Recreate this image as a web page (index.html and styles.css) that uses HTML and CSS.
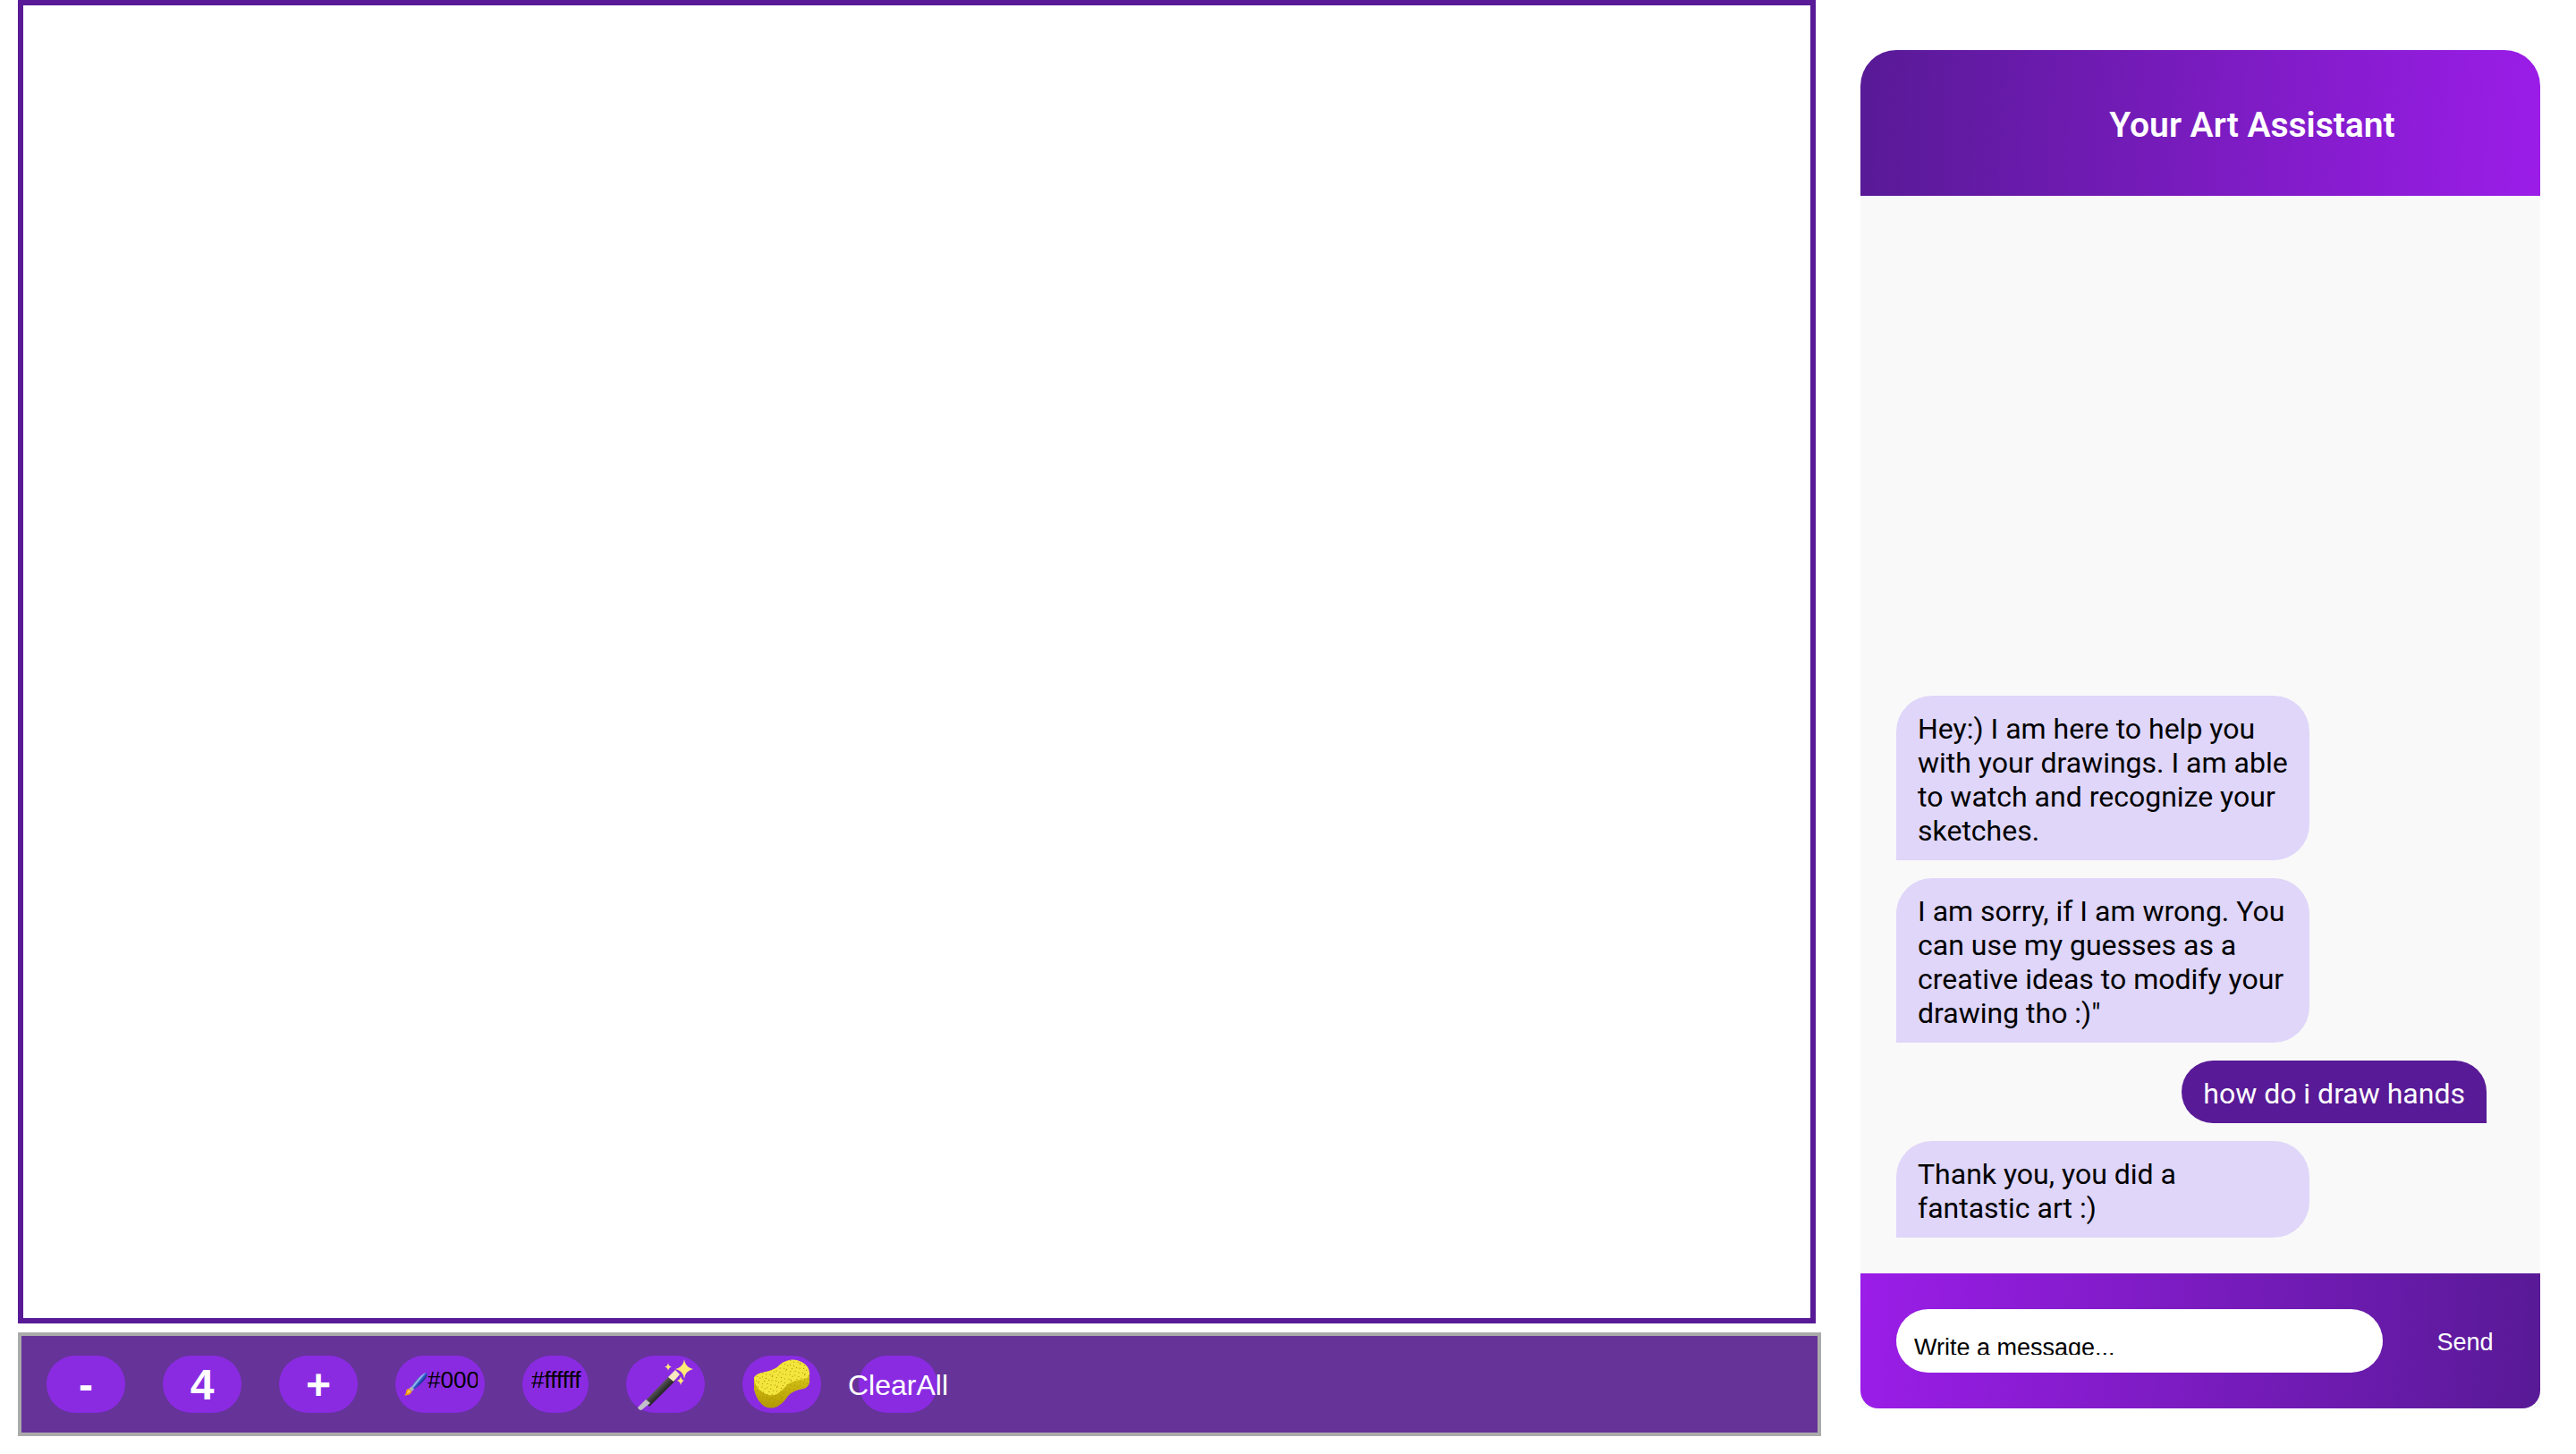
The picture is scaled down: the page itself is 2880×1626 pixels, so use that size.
FILE: index.html
```html
<!DOCTYPE html>
<html lang="en">
<head>
<meta charset="utf-8">
<title>Your Art Assistant</title>
<link rel="stylesheet" href="styles.css">
</head>
<body>
<main class="app">
  <section class="studio">
    <canvas class="board" aria-label="Drawing board"></canvas>
    <div class="toolbar" role="toolbar" aria-label="Drawing tools">
      <button class="tool" type="button" aria-label="Thinner">-</button>
      <output class="tool tool-size" aria-label="Brush size">4</output>
      <button class="tool" type="button" aria-label="Thicker">+</button>
      <label class="tool tool-color">
        <svg class="brush" viewBox="0 0 26 26" aria-hidden="true">
          <defs><linearGradient id="handle" gradientUnits="userSpaceOnUse" x1="13" y1="7" x2="19" y2="12"><stop offset="0" stop-color="#16308a"/><stop offset="0.4" stop-color="#9ec5f4"/><stop offset="0.6" stop-color="#3560cf"/><stop offset="1" stop-color="#132a8c"/></linearGradient></defs>
          <path d="M8 15.500Q14 6 22 1Q25-.5 25.800 1.500Q26 3 24 6Q19 13 11 18.500Z" fill="url(#handle)"/>
          <path d="M8 15.500L11 18.500L8.500 21L5 18Z" fill="#aeb2ba"/>
          <path d="M5 18L8.500 21Q7 25.500 0 25.500Q2.500 23.500 2 21Q2.500 18 5 18Z" fill="#f39a1c"/>
          <path d="M5 19L7 21Q5 23 3 23Z" fill="#ffd35a"/>
        </svg>
        <input class="color" type="text" value="#000000" aria-label="Pen color">
      </label>
      <label class="tool tool-color">
        <input class="color" type="text" value="#ffffff" aria-label="Background color">
      </label>
      <button class="tool" type="button" aria-label="Magic wand">
        <svg class="icon" viewBox="0 0 64 58" aria-hidden="true">
          <defs><linearGradient id="stick" gradientUnits="userSpaceOnUse" x1="22" y1="32" x2="29" y2="39"><stop offset="0" stop-color="#5c5c5c"/><stop offset="1" stop-color="#1f1f1f"/></linearGradient></defs>
          <path d="M9 47L37 18L43 24L14 53Z" fill="url(#stick)"/>
          <path d="M35 20L43 12L48 17L41 25Z" fill="#f7e8c0"/>
          <path d="M10 45L1 54Q2 57 5 57L15 49Z" fill="#c2c0c8"/>
          <path d="M53 0Q54 9 63 11Q54 13 53 22Q52 13 43 11Q52 9 53 0ZM35 4Q35.500 8 39 8.500Q35.500 9 35 13Q34.500 9 31 8.500Q34.500 8 35 4ZM49 19Q49.500 23 53 24Q49.500 25 49 29Q48.500 25 45 24Q48.500 23 49 19Z" fill="#ffec74"/>
        </svg>
      </button>
      <button class="tool" type="button" aria-label="Eraser">
        <svg class="icon" viewBox="0 0 64 58" aria-hidden="true">
          <defs>
            <linearGradient id="side" x1="0" y1="0" x2="0" y2="1"><stop offset="0.3" stop-color="#d2bf16"/><stop offset="1" stop-color="#b39a00"/></linearGradient>
            <pattern id="pores" width="17" height="13" patternUnits="userSpaceOnUse" patternTransform="rotate(-24)"><path d="M1 1h1v1h-1zM6 2h1v1h-1zM11 0h1v1h-1zM15 3h1v1h-1zM3 5h1v1h-1zM9 4h1v1h-1zM13 6h1v1h-1zM6 8h1v1h-1zM1 9h1v1h-1zM10 10h1v1h-1zM15 9h1v1h-1zM4 12h1v1h-1zM12 12h1v1h-1z" fill="#a28c06"/></pattern>
          </defs>
          <path d="M1 20L1 34Q4 47 13 53Q20 56 27 53Q35 48 39 41Q46 34 57 33Q62 31 63 26V14L30 8Z" fill="url(#side)"/>
          <path d="M1 21Q2 16 14 14Q24 13 31 5Q40-1 49 1Q63 5 63 16Q63 22 52 23Q40 25 34 33Q26 42 17 40Q3 36 1 21Z" fill="#f4e53c"/>
          <path d="M1 20L1 34Q4 47 13 53Q20 56 27 53Q35 48 39 41Q46 34 57 33Q62 31 63 26V14Q60 4 49 1Q40-1 31 5Q24 13 14 14Q2 16 1 20Z" fill="url(#pores)"/>
        </svg>
      </button>
      <button class="tool tool-clear" type="button">ClearAll</button>
    </div>
  </section>

  <aside class="chat">
    <header class="chat-header"><h1 class="chat-title">Your Art Assistant</h1></header>
    <div class="messages">
      <p class="message">Hey:) I am here to help you with your drawings. I am able to watch and recognize your sketches.</p>
      <p class="message">I am sorry, if I am wrong. You can use my guesses as a creative ideas to modify your drawing tho :)"</p>
      <p class="message message-own">how do i draw hands</p>
      <p class="message">Thank you, you did a fantastic art :)</p>
    </div>
    <div class="composer-dock">
      <form class="composer">
        <textarea class="entry" rows="1" placeholder="Write a message..." aria-label="Write a message"></textarea>
        <button class="send" type="button">Send</button>
      </form>
    </div>
  </aside>
</main>
</body>
</html>
```
FILE: styles.css
```css
* { box-sizing: border-box; }

body {
  margin: 0;
  background: #fff;
  font-family: Roboto, sans-serif;
}

button, input, textarea, output {
  border: 0;
  margin: 0;
  font-family: "Liberation Sans", sans-serif;
}

.app {
  display: grid;
  grid-template-columns: minmax(0, 1fr) 760px;
  column-gap: 44px;
  min-height: 100vh;
  padding: 0 40px 20px 20px;
}

/* Drawing side */
.studio {
  display: flex;
  flex-direction: column;
  gap: 10px;
}

.board {
  flex: 1;
  width: auto;
  min-height: 0;
  margin-right: 6px;
  border: 6px solid #581a96;
}

.toolbar {
  display: flex;
  align-items: flex-start;
  gap: 42px;
  height: 116px;
  padding: 22px 28px;
  border: 4px solid #aaa;
  background: #639;
}

.tool {
  display: flex;
  align-items: center;
  justify-content: center;
  width: 88px;
  height: 64px;
  padding: 2px 0 0;
  border-radius: 32px;
  background: #8a2be2;
  color: #fff;
  font-size: 48px;
  font-weight: 700;
  line-height: 56px;
}

.tool-color {
  width: auto;
  padding: 0 8px 0 10px;
}

.brush {
  width: 26px;
  height: 26px;
}

.color {
  width: 56px;
  height: 32px;
  margin-bottom: 10px;
  padding: 0;
  background: transparent;
  color: #000;
  font-size: 26px;
}

.icon {
  flex: none;
  width: 64px;
  height: 58px;
}

.tool-clear {
  font-size: 32px;
  font-weight: 400;
}

/* Chat side */
.chat {
  display: flex;
  flex-direction: column;
  margin: 56px 0 31px;
  border-radius: 40px 40px 0 0;
  background: #f9f9f9;
}

.chat-header {
  padding: 61px 0 55px 116px;
  border-radius: 40px 40px 0 0;
  background: linear-gradient(93deg, #581a96, #9b1de8);
  color: #fff;
  text-align: center;
}

.chat-title {
  margin: 0;
  font-size: 39px;
  font-weight: 600;
  line-height: 47px;
}

.messages {
  flex: 1;
  display: flex;
  flex-direction: column;
  justify-content: flex-end;
  align-items: flex-start;
  gap: 20px;
  padding: 40px 60px 40px 40px;
}

.message {
  max-width: 70%;
  margin: 0;
  padding: 18px 24px 14px;
  border-radius: 40px 40px 40px 0;
  background: #dfd6f9;
  color: #000;
  font-size: 32px;
  line-height: 38px;
}

.message-own {
  align-self: flex-end;
  border-radius: 40px 40px 0 40px;
  background: #581a96;
  color: #fff;
}

.composer {
  display: flex;
  align-items: center;
  gap: 44px;
  padding: 40px 36px 40px 40px;
  border-radius: 0 0 20px 20px;
  background: linear-gradient(93deg, #9b1de8, #581a96);
}

.entry {
  flex: 1;
  height: 71px;
  padding: 28px 20px 0;
  border-bottom: 20px solid #fff;
  border-radius: 36px;
  background: #fff;
  font-size: 27px;
  line-height: 31px;
  resize: none;
  overflow: hidden;
}

.entry::placeholder { color: #000; }

.send {
  width: 96px;
  padding: 3px 0 0;
  background: transparent;
  color: #fff;
  font-size: 27px;
  line-height: 31px;
}
```
